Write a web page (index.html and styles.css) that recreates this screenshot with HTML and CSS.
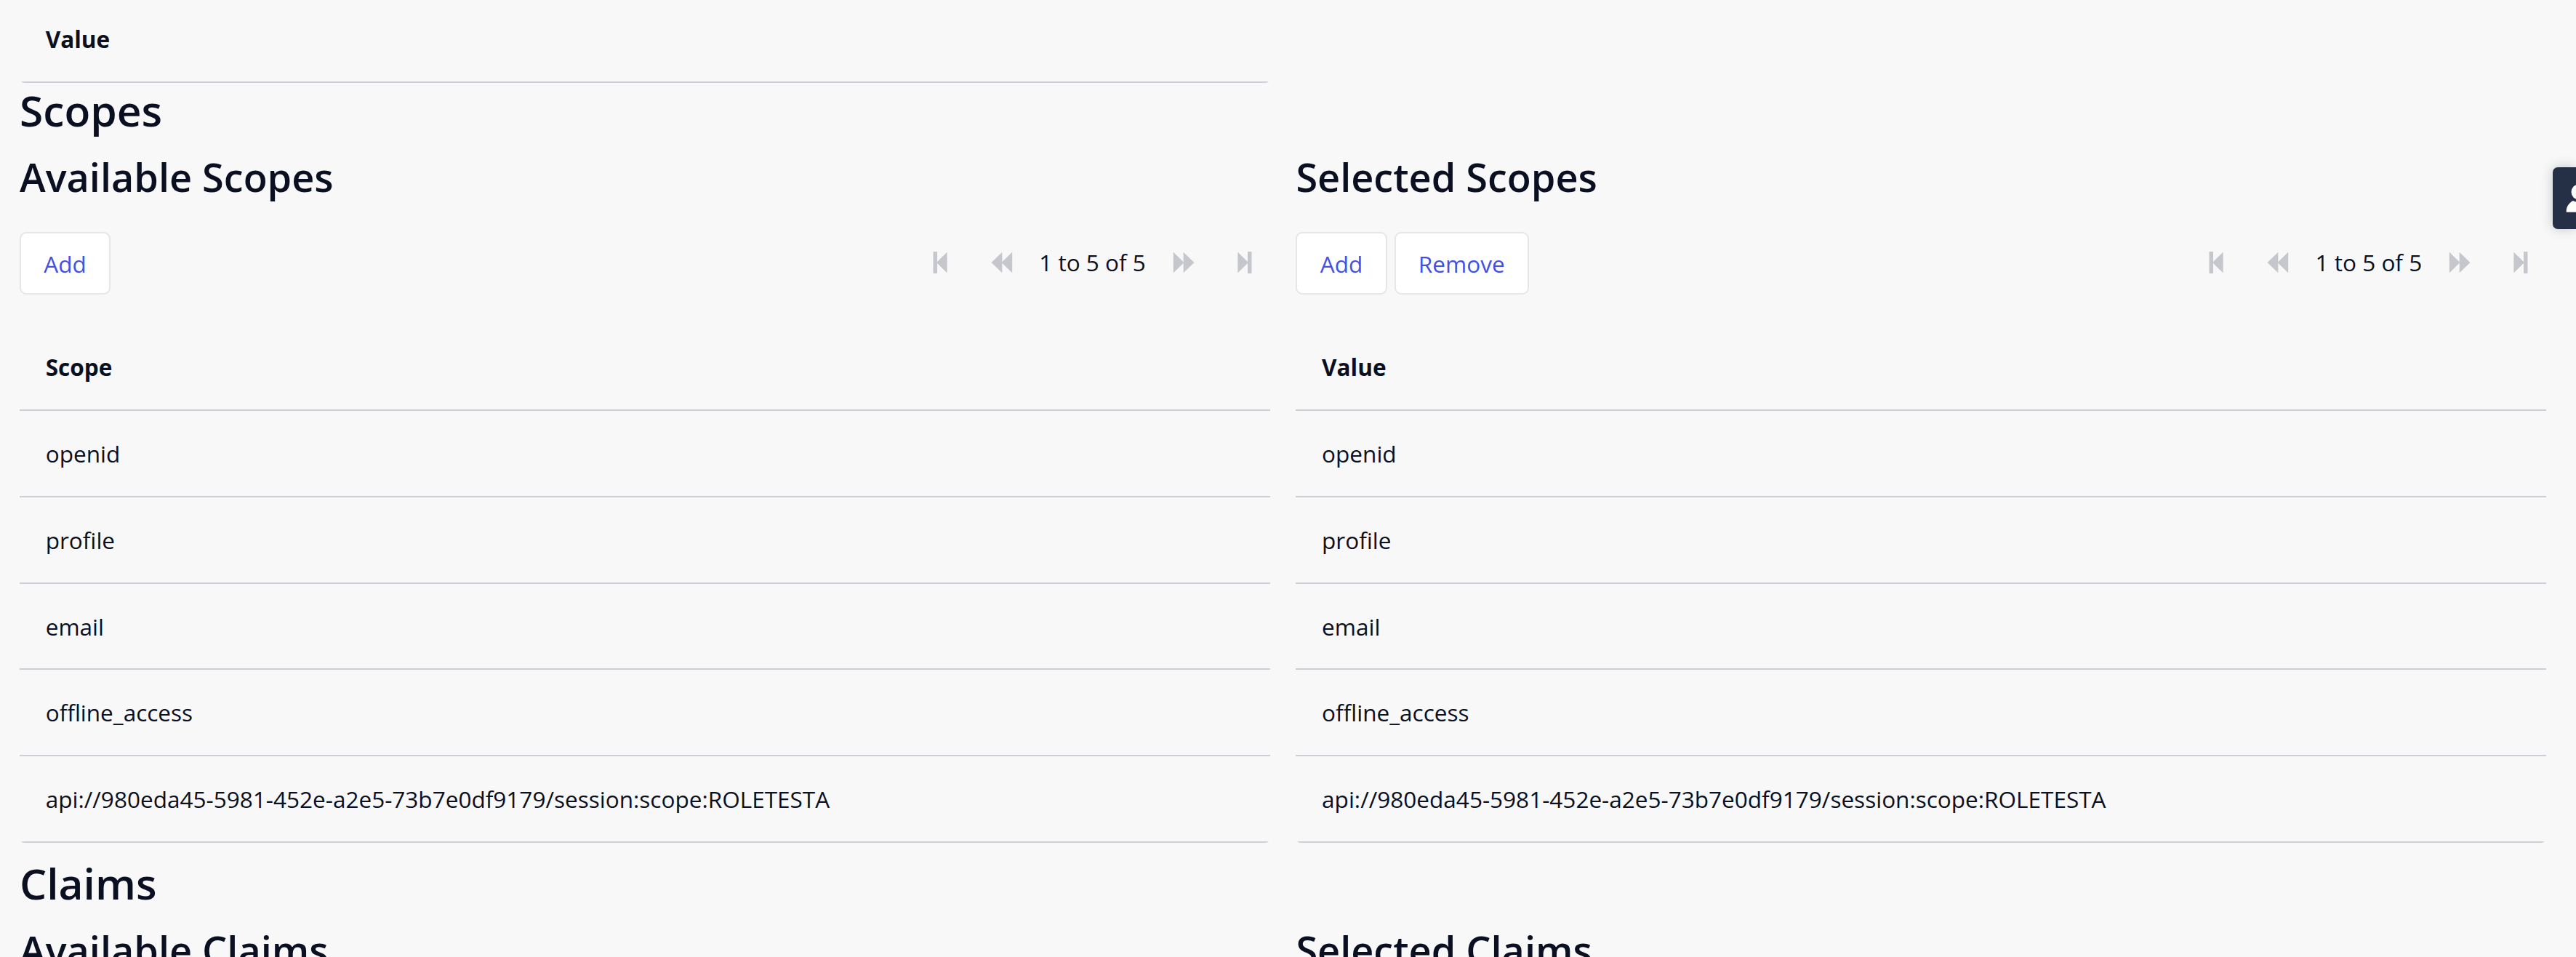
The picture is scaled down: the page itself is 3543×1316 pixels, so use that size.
FILE: index.html
```
<!DOCTYPE html>
<html lang="en">
<head>
<meta charset="utf-8">
<title>Scopes and Claims</title>
<link rel="stylesheet" href="styles.css">
</head>
<body>
<svg class="symbols" aria-hidden="true">
  <symbol id="step-first" viewBox="0 0 20 30"><rect x="0.5" y="0" width="5.5" height="30" rx="1"/><path d="M5 15 19 1.2Q19.6.8 19.6 1.4V28.6Q19.6 29.2 19 28.8Z"/></symbol>
  <symbol id="step-back" viewBox="0 0 30 30"><path d="M.5 15 14.8 1.2Q15.3.8 15.3 1.4V28.6Q15.3 29.2 14.8 28.8Z"/><path d="M14.5 15 28.6 1.2Q29.2.8 29.2 1.4V28.6Q29.2 29.2 28.6 28.8Z"/></symbol>
</svg>
<main class="page">
  <div class="columns">
    <div class="table"><div class="row head">Value</div></div>
  </div>

  <section class="section">
    <h1>Scopes</h1>
    <div class="columns">
      <div class="panel">
        <h2>Available Scopes</h2>
        <div class="toolbar">
          <button class="button">Add</button>
          <nav class="pager">
            <span class="page-button"><svg class="step"><use href="#step-first"/></svg></span>
            <span class="page-button"><svg class="skip"><use href="#step-back"/></svg></span>
            <span class="page-label">1 to 5 of 5</span>
            <span class="page-button"><svg class="skip flip"><use href="#step-back"/></svg></span>
            <span class="page-button"><svg class="step flip"><use href="#step-first"/></svg></span>
          </nav>
        </div>
        <div class="table">
          <div class="row head">Scope</div>
          <div class="row">openid</div>
          <div class="row">profile</div>
          <div class="row">email</div>
          <div class="row">offline_access</div>
          <div class="row">api://980eda45-5981-452e-a2e5-73b7e0df9179/session:scope:ROLETESTA</div>
        </div>
      </div>
      <div class="panel">
        <h2>Selected Scopes</h2>
        <div class="toolbar">
          <button class="button">Add</button>
          <button class="button">Remove</button>
          <nav class="pager">
            <span class="page-button"><svg class="step"><use href="#step-first"/></svg></span>
            <span class="page-button"><svg class="skip"><use href="#step-back"/></svg></span>
            <span class="page-label">1 to 5 of 5</span>
            <span class="page-button"><svg class="skip flip"><use href="#step-back"/></svg></span>
            <span class="page-button"><svg class="step flip"><use href="#step-first"/></svg></span>
          </nav>
        </div>
        <div class="table">
          <div class="row head">Value</div>
          <div class="row">openid</div>
          <div class="row">profile</div>
          <div class="row">email</div>
          <div class="row">offline_access</div>
          <div class="row">api://980eda45-5981-452e-a2e5-73b7e0df9179/session:scope:ROLETESTA</div>
        </div>
      </div>
    </div>
  </section>

  <section class="section spaced">
    <h1>Claims</h1>
    <div class="columns">
      <div class="panel"><h2>Available Claims</h2></div>
      <div class="panel"><h2>Selected Claims</h2></div>
    </div>
  </section>
</main>
<aside class="user-tab">
  <svg viewBox="0 0 32 42"><circle cx="18" cy="13" r="10.5"/><path d="M.7 40.8V38C1.5 32 5 27.5 10 25Q18 29 26 25C31 27.5 34.5 32 35.3 38V40.8Z"/></svg>
</aside>
</body>
</html>
```
FILE: styles.css
```
* { box-sizing: border-box; }

body {
  margin: 0;
  height: 1316px;
  overflow: hidden;
  position: relative;
  background: #f8f8f8;
  color: #0a1021;
  font-family: "Open Sans", "Noto Sans", sans-serif;
  font-size: 31.54px;
}

.symbols { display: none; }

.page {
  margin-top: -4.8px;
  padding: 0 41px 0 27px;
}

.columns {
  display: grid;
  grid-template-columns: 1719.5px 1719.5px;
  column-gap: 35.9px;
}

.section.spaced { margin-top: 18px; }

h1, h2 {
  margin: 0;
  font-weight: 600;
}

h1 {
  height: 75.4px;
  font-size: 58.7px;
  line-height: 75.4px;
}

h2 {
  height: 107.2px;
  padding-top: 1px;
  font-size: 54px;
  line-height: 107.2px;
}

.toolbar {
  display: flex;
  align-items: center;
  gap: 10px;
  margin: 22.4px 0 41.2px;
}

.button {
  height: 86px;
  padding: 1px 31.3px 0;
  border: 2px solid #e6e6e6;
  border-radius: 9px;
  background: #fff;
  color: #4350e6;
  font: inherit;
}

.pager {
  display: flex;
  align-items: center;
  gap: 16.5px;
  height: 86px;
  margin-left: auto;
  padding: 0 0.5px 2px 0;
}

.page-button {
  display: flex;
  justify-content: center;
  width: 68px;
}

.page-button svg {
  height: 30px;
  fill: #c6c6cd;
}

.step { width: 20px; }
.skip { width: 30px; }
.flip { transform: scaleX(-1); }

.page-label {
  width: 149px;
  text-align: center;
  white-space: nowrap;
}

.table {
  overflow: hidden;
  border-radius: 0 0 7px 7px;
}

.row {
  height: 118.8px;
  padding: 1px 0 0 35.7px;
  border-bottom: 2px solid #cecfd6;
  line-height: 116.8px;
  white-space: nowrap;
}

.row.head { font-weight: 700; }

.user-tab {
  position: absolute;
  top: 230px;
  right: 0;
  width: 32px;
  height: 85px;
  overflow: hidden;
  border-radius: 7px 0 0 7px;
  background: #253047;
  box-shadow: 0 0 16px rgba(37, 60, 71, 0.25);
  padding: 21px 0 0 18px;
}

.user-tab svg {
  display: block;
  width: 32px;
  height: 42px;
  overflow: visible;
  fill: #fff;
}
```
